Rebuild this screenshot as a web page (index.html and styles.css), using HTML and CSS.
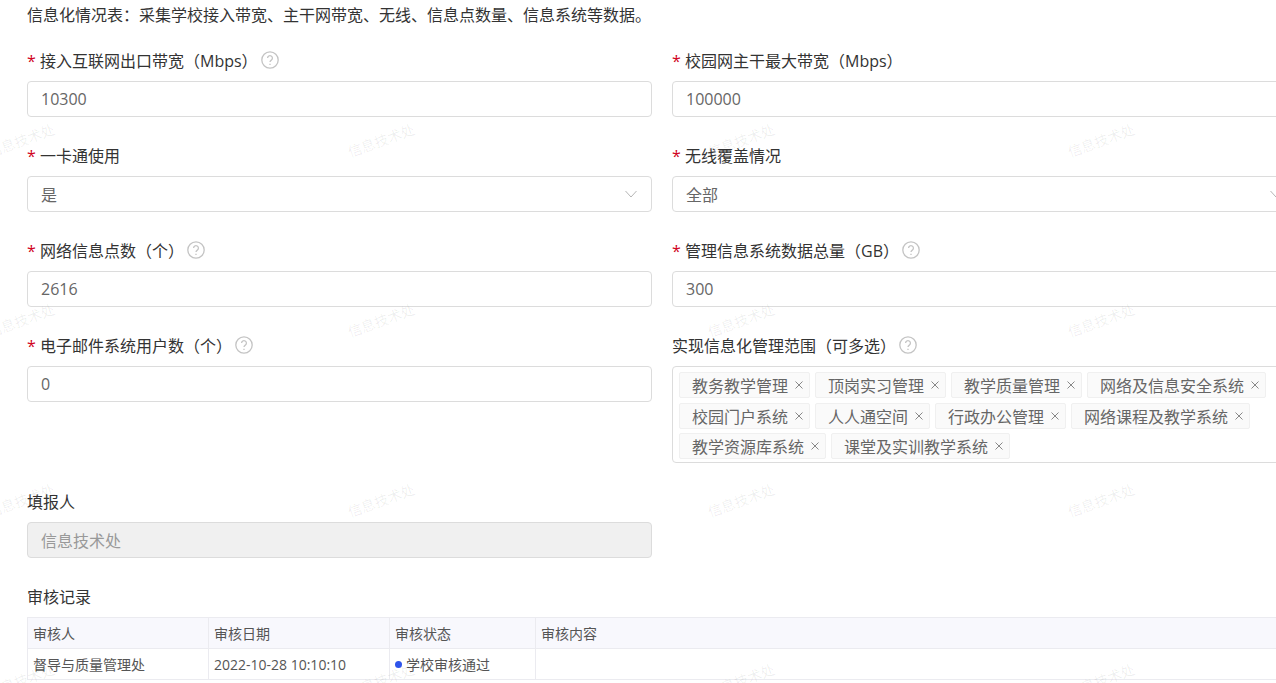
FILE: index.html
```html
<!DOCTYPE html>
<html lang="zh-CN">
<head>
    <meta charset="UTF-8">
    <meta name="viewport" content="width=device-width, initial-scale=1.0">
    <title>信息化情况表</title>
    <link rel="stylesheet" href="styles.css">
</head>
<body>
    <div class="page">
        <p class="desc">信息化情况表：采集学校接入带宽、主干网带宽、无线、信息点数量、信息系统等数据。</p>

        <div class="form-grid">
            <div class="field">
                <div class="field-label"><span class="req">*</span>接入互联网出口带宽（Mbps）<svg class="help" viewBox="0 0 18 18"><circle cx="9" cy="9" r="8.2"/><path d="M6.6 7.1a2.4 2.4 0 1 1 3.7 2c-.9.6-1.3 1-1.3 2"/><path d="M9 12.7v1.3"/></svg></div>
                <input class="text-input" type="text" value="10300" readonly>
            </div>
            <div class="field">
                <div class="field-label"><span class="req">*</span>校园网主干最大带宽（Mbps）</div>
                <input class="text-input" type="text" value="100000" readonly>
            </div>

            <div class="field">
                <div class="field-label"><span class="req">*</span>一卡通使用</div>
                <div class="select-box">是<svg class="chevron" viewBox="0 0 12 8"><path d="M.5 1l5.500 6 5.500-6"/></svg></div>
            </div>
            <div class="field">
                <div class="field-label"><span class="req">*</span>无线覆盖情况</div>
                <div class="select-box">全部<svg class="chevron" viewBox="0 0 12 8"><path d="M.5 1l5.500 6 5.500-6"/></svg></div>
            </div>

            <div class="field">
                <div class="field-label"><span class="req">*</span>网络信息点数（个）<svg class="help" viewBox="0 0 18 18"><circle cx="9" cy="9" r="8.2"/><path d="M6.6 7.1a2.4 2.4 0 1 1 3.7 2c-.9.6-1.3 1-1.3 2"/><path d="M9 12.7v1.3"/></svg></div>
                <input class="text-input" type="text" value="2616" readonly>
            </div>
            <div class="field">
                <div class="field-label"><span class="req">*</span>管理信息系统数据总量（GB）<svg class="help" viewBox="0 0 18 18"><circle cx="9" cy="9" r="8.2"/><path d="M6.6 7.1a2.4 2.4 0 1 1 3.7 2c-.9.6-1.3 1-1.3 2"/><path d="M9 12.7v1.3"/></svg></div>
                <input class="text-input" type="text" value="300" readonly>
            </div>

            <div class="field">
                <div class="field-label"><span class="req">*</span>电子邮件系统用户数（个）<svg class="help" viewBox="0 0 18 18"><circle cx="9" cy="9" r="8.2"/><path d="M6.6 7.1a2.4 2.4 0 1 1 3.7 2c-.9.6-1.3 1-1.3 2"/><path d="M9 12.7v1.3"/></svg></div>
                <input class="text-input" type="text" value="0" readonly>
            </div>
            <div class="field">
                <div class="field-label">实现信息化管理范围（可多选）<svg class="help" viewBox="0 0 18 18"><circle cx="9" cy="9" r="8.2"/><path d="M6.6 7.1a2.4 2.4 0 1 1 3.7 2c-.9.6-1.3 1-1.3 2"/><path d="M9 12.7v1.3"/></svg></div>
                <div class="tag-box">
                    <span class="tag">教务教学管理<svg class="tag-close" viewBox="0 0 8 8"><path d="M.5.5l7 7M7.500.5l-7 7"/></svg></span>
                    <span class="tag">顶岗实习管理<svg class="tag-close" viewBox="0 0 8 8"><path d="M.5.5l7 7M7.500.5l-7 7"/></svg></span>
                    <span class="tag">教学质量管理<svg class="tag-close" viewBox="0 0 8 8"><path d="M.5.5l7 7M7.500.5l-7 7"/></svg></span>
                    <span class="tag">网络及信息安全系统<svg class="tag-close" viewBox="0 0 8 8"><path d="M.5.5l7 7M7.500.5l-7 7"/></svg></span>
                    <span class="tag">校园门户系统<svg class="tag-close" viewBox="0 0 8 8"><path d="M.5.5l7 7M7.500.5l-7 7"/></svg></span>
                    <span class="tag">人人通空间<svg class="tag-close" viewBox="0 0 8 8"><path d="M.5.5l7 7M7.500.5l-7 7"/></svg></span>
                    <span class="tag">行政办公管理<svg class="tag-close" viewBox="0 0 8 8"><path d="M.5.5l7 7M7.500.5l-7 7"/></svg></span>
                    <span class="tag">网络课程及教学系统<svg class="tag-close" viewBox="0 0 8 8"><path d="M.5.5l7 7M7.500.5l-7 7"/></svg></span>
                    <span class="tag">教学资源库系统<svg class="tag-close" viewBox="0 0 8 8"><path d="M.5.5l7 7M7.500.5l-7 7"/></svg></span>
                    <span class="tag">课堂及实训教学系统<svg class="tag-close" viewBox="0 0 8 8"><path d="M.5.5l7 7M7.500.5l-7 7"/></svg></span>
                </div>
            </div>

            <div class="field">
                <div class="field-label">填报人</div>
                <input class="text-input disabled" type="text" value="信息技术处" disabled>
            </div>
        </div>

        <div class="records">
            <div class="records-title">审核记录</div>
            <table class="records-table">
                <thead>
                    <tr>
                        <th class="col-a">审核人</th>
                        <th class="col-b">审核日期</th>
                        <th class="col-c">审核状态</th>
                        <th>审核内容</th>
                    </tr>
                </thead>
                <tbody>
                    <tr>
                        <td>督导与质量管理处</td>
                        <td>2022-10-28 10:10:10</td>
                        <td><span class="dot"></span>学校审核通过</td>
                        <td></td>
                    </tr>
                </tbody>
            </table>
        </div>
    </div>

    <!-- watermark layer -->
    <div class="watermarks">
        <span>信息技术处</span><span>信息技术处</span><span>信息技术处</span><span>信息技术处</span>
        <span>信息技术处</span><span>信息技术处</span><span>信息技术处</span><span>信息技术处</span>
        <span>信息技术处</span><span>信息技术处</span><span>信息技术处</span><span>信息技术处</span>
        <span>信息技术处</span><span>信息技术处</span><span>信息技术处</span><span>信息技术处</span>
    </div>
</body>
</html>
```

FILE: styles.css
```css
html, body {
    height: 100%;
}
body {
    margin: 0;
    position: relative;
    overflow: hidden;
    background-color: #fff;
    color: #333;
    font-family: "Open Sans", "Noto Sans CJK SC", sans-serif;
    font-size: 16px;
}
.page {
    width: 1270px;
    padding-left: 27px;
}
.desc {
    margin: 0;
    padding-top: 3px;
    height: 46px;
    line-height: 24px;
    box-sizing: border-box;
}
.form-grid {
    display: grid;
    grid-template-columns: 625px 625px;
    column-gap: 20px;
    row-gap: 27px;
    padding-top: 3px;
}
.field-label {
    display: flex;
    align-items: center;
    height: 24px;
    line-height: 24px;
    margin-bottom: 8px;
}
.req {
    width: 13px;
    color: #d0021b;
}
.help {
    width: 18px;
    height: 18px;
    margin: -2px 0 0 3px;
    fill: none;
    stroke: #c4c4c4;
    stroke-width: 1.3;
}
.text-input, .select-box {
    display: flex;
    align-items: center;
    width: 100%;
    height: 36px;
    box-sizing: border-box;
    padding: 0 13px;
    border: 1px solid #dcdcdc;
    border-radius: 4px;
    background-color: #fff;
    color: #666;
    font-family: inherit;
    font-size: 16px;
    outline: none;
}
.select-box {
    justify-content: space-between;
    padding-right: 14px;
}
.chevron {
    width: 12px;
    height: 8px;
    fill: none;
    stroke: #b5b5b5;
    stroke-width: 1;
}
.text-input.disabled {
    background-color: #f0f0f0;
    color: #999;
    -webkit-text-fill-color: #999;
    opacity: 1;
}
.tag-box {
    display: flex;
    flex-wrap: wrap;
    gap: 4.5px 5px;
    box-sizing: border-box;
    height: 97px;
    padding: 5px 6px;
    border: 1px solid #dcdcdc;
    border-radius: 4px;
}
.tag {
    display: inline-flex;
    align-items: center;
    height: 26px;
    box-sizing: border-box;
    padding: 0 6px 0 12px;
    border: 1px solid #f0f0f0;
    border-radius: 2px;
    background-color: #fafafa;
    color: #666;
    white-space: nowrap;
}
.tag-close {
    width: 8px;
    height: 8px;
    margin-left: 7px;
    fill: none;
    stroke: #888;
    stroke-width: 1;
}
.records {
    margin-top: 27px;
}
.records-title {
    height: 24px;
    line-height: 24px;
    margin-bottom: 8px;
}
.records-table {
    width: 1270px;
    table-layout: fixed;
    border-collapse: collapse;
    font-size: 14px;
}
.records-table th, .records-table td {
    height: 30px;
    padding: 0 5px;
    border: 1px solid #ebebf0;
    text-align: left;
    font-weight: normal;
    color: #555;
    white-space: nowrap;
}
.records-table th {
    background-color: #f8f8fd;
}
.col-a, .col-b {
    width: 170px;
}
.col-c {
    width: 135px;
}
.dot {
    display: inline-block;
    width: 7px;
    height: 7px;
    margin-right: 4px;
    border-radius: 50%;
    background-color: #2f54eb;
    vertical-align: 2px;
}
.watermarks {
    position: absolute;
    top: 50px;
    left: -159px;
    display: grid;
    grid-template-columns: repeat(4, 360px);
    grid-auto-rows: 180px;
    pointer-events: none;
}
.watermarks span {
    display: flex;
    align-items: center;
    justify-content: center;
    color: rgba(0, 0, 0, 0.07);
    font-size: 14px;
    transform: rotate(-20deg);
}
```
